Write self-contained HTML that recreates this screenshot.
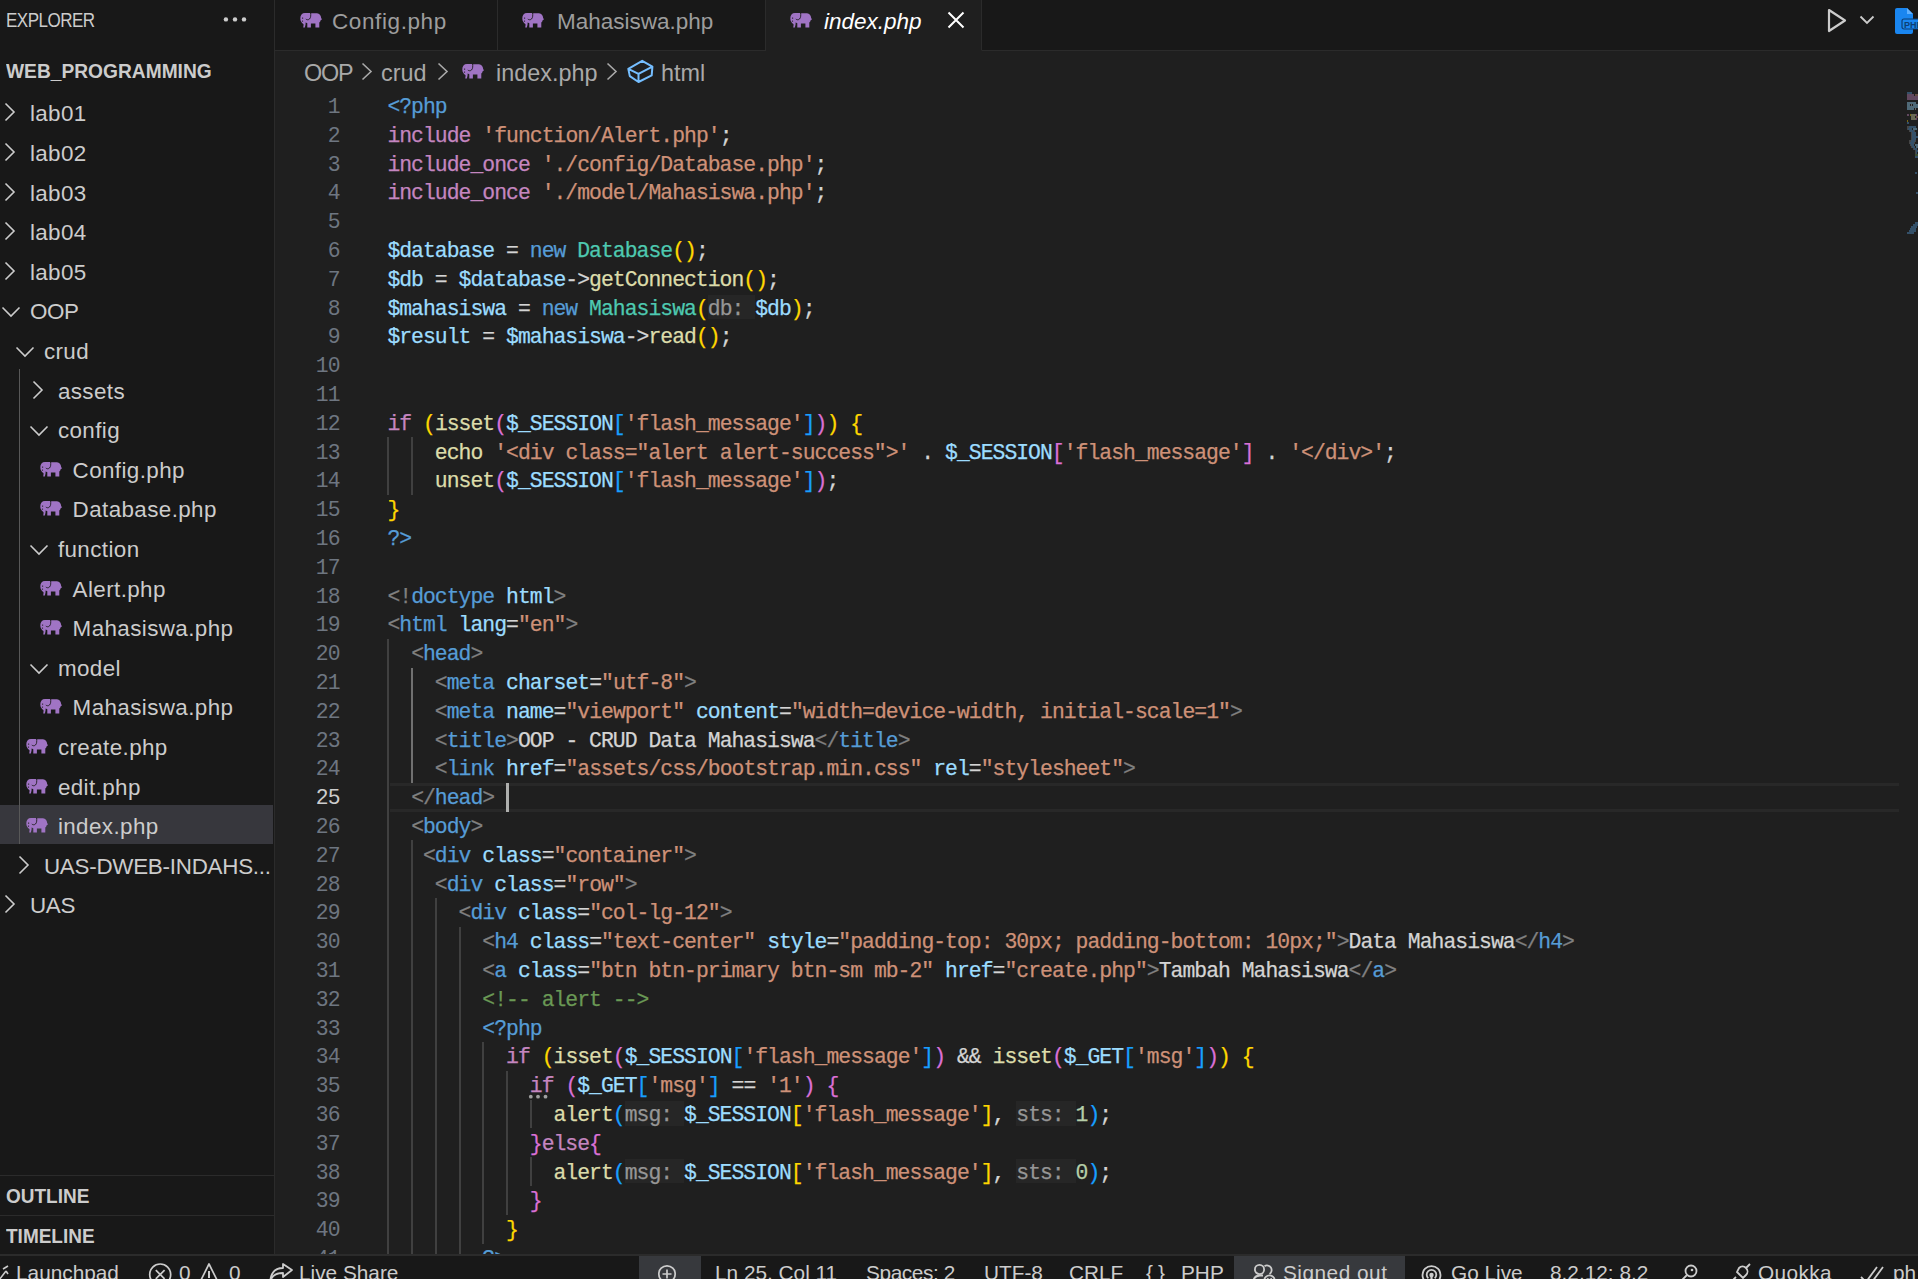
<!DOCTYPE html>
<html><head><meta charset="utf-8"><title>index.php - VS Code</title>
<style>
*{margin:0;padding:0;box-sizing:border-box}
html,body{width:1918px;height:1279px;overflow:hidden;background:#1f1f1f}
body{position:relative;font-family:"Liberation Sans",sans-serif;color:#cccccc}
.abs{position:absolute}
#side{position:absolute;left:0;top:0;width:275px;height:1254px;background:#181818;border-right:1px solid #2b2b2b}
#tabs{position:absolute;left:275px;top:0;width:1643px;height:51px;background:#181818;border-bottom:1px solid #2b2b2b}
.tab{position:absolute;top:0;height:51px;background:#181818;border-right:1px solid #2b2b2b;border-bottom:1px solid #2b2b2b}
.tab.act{background:#1f1f1f;border-bottom:1px solid #1f1f1f}
.tab .ic{position:absolute;top:12px}
.tab .tx{position:absolute;top:0;line-height:44px;font-size:22.5px;color:#9d9d9d;white-space:nowrap}
.tab.act .tx{color:#ffffff;font-style:italic}
#crumbs{position:absolute;left:275px;top:51px;height:40px;width:1643px;background:#1f1f1f}
#crumbs span{position:absolute;white-space:nowrap}
.ct{font-size:23.4px;color:#a9a9a9;top:2px;line-height:40px}
#nums{position:absolute;left:275px;top:93.1px;width:64.5px;text-align:right;font-family:"Liberation Mono",monospace;font-size:21.4px;letter-spacing:-0.972px;line-height:28.8px;color:#6e7681}
#nums .cur{color:#cccccc}
#code{position:absolute;left:387.4px;top:93.1px;font-family:"Liberation Mono",monospace;font-size:21.4px;letter-spacing:-0.972px;line-height:28.8px;white-space:pre;color:#d4d4d4;-webkit-text-stroke:0.25px currentColor}
.ln{height:28.8px}
.h{color:#969696;position:relative;z-index:0}.h::before{content:"";position:absolute;left:0;right:0;top:-1.8px;height:24.4px;background:#262626;z-index:-1}
.ig{position:absolute;width:2px;background:#404040}
.ig.act{background:#707070}
#curline{position:absolute;left:389.5px;top:782.8px;width:1509px;height:28.8px;border-top:3px solid #282828;border-bottom:3px solid #282828}
#cursor{position:absolute;left:506px;top:783px;width:3px;height:29px;background:#aeafad}
#status{position:absolute;left:0;top:1254px;width:1918px;height:25px;background:#181818;border-top:2px solid #2b2b2b;overflow:hidden}
#status span{position:absolute;white-space:nowrap;font-size:20.8px;line-height:36px;top:-1.2px;color:#cccccc}
.row{position:absolute;left:0;width:273px;height:39.6px;overflow:hidden}
.row.sel{background:linear-gradient(#37373d,#37373d) 0 0/273px 39px no-repeat}
.row span{position:absolute}
.tl{font-size:22.4px;line-height:39.6px;top:2px;white-space:nowrap;color:#cccccc}
.chr{top:10px}
.chd{top:14px}
.fic{top:12px}
.sh{position:absolute;left:0;width:274px;border-top:1px solid #2b2b2b;height:40px}
</style></head><body>
<div id="side">
  <span class="abs" style="left:6px;top:0;line-height:40px;font-size:19.8px;letter-spacing:-0.6px;transform:scaleX(0.86);transform-origin:left">EXPLORER</span>
  <svg class="abs" style="left:220px;top:14px" width="30" height="11" viewBox="0 0 30 11"><circle cx="5.9" cy="5.4" r="2.2" fill="#cccccc"/><circle cx="15" cy="5.4" r="2.2" fill="#cccccc"/><circle cx="24" cy="5.4" r="2.2" fill="#cccccc"/></svg>
  <span class="abs" style="left:6px;top:51.2px;line-height:40px;font-size:19.8px;font-weight:bold;transform:scaleX(0.97);transform-origin:left">WEB_PROGRAMMING</span>
  <div class="row" style="top:92.3px"><span class="chr" style="left:4px"><svg width="12" height="20" viewBox="0 0 12 20"><path d="M1.5,1.5 L10,10 L1.5,18.5" fill="none" stroke="#cccccc" stroke-width="1.6"/></svg></span><span class="tl" style="left:29.9px;letter-spacing:0.4px">lab01</span></div><div class="row" style="top:131.9px"><span class="chr" style="left:4px"><svg width="12" height="20" viewBox="0 0 12 20"><path d="M1.5,1.5 L10,10 L1.5,18.5" fill="none" stroke="#cccccc" stroke-width="1.6"/></svg></span><span class="tl" style="left:29.9px;letter-spacing:0.4px">lab02</span></div><div class="row" style="top:171.5px"><span class="chr" style="left:4px"><svg width="12" height="20" viewBox="0 0 12 20"><path d="M1.5,1.5 L10,10 L1.5,18.5" fill="none" stroke="#cccccc" stroke-width="1.6"/></svg></span><span class="tl" style="left:29.9px;letter-spacing:0.4px">lab03</span></div><div class="row" style="top:211.1px"><span class="chr" style="left:4px"><svg width="12" height="20" viewBox="0 0 12 20"><path d="M1.5,1.5 L10,10 L1.5,18.5" fill="none" stroke="#cccccc" stroke-width="1.6"/></svg></span><span class="tl" style="left:29.9px;letter-spacing:0.4px">lab04</span></div><div class="row" style="top:250.7px"><span class="chr" style="left:4px"><svg width="12" height="20" viewBox="0 0 12 20"><path d="M1.5,1.5 L10,10 L1.5,18.5" fill="none" stroke="#cccccc" stroke-width="1.6"/></svg></span><span class="tl" style="left:29.9px;letter-spacing:0.4px">lab05</span></div><div class="row" style="top:290.3px"><span class="chd" style="left:1px"><svg width="20" height="12" viewBox="0 0 20 12"><path d="M1.5,1.5 L10,10 L18.5,1.5" fill="none" stroke="#cccccc" stroke-width="1.6"/></svg></span><span class="tl" style="left:29.9px;letter-spacing:-0.3px">OOP</span></div><div class="row" style="top:329.9px"><span class="chd" style="left:15px"><svg width="20" height="12" viewBox="0 0 20 12"><path d="M1.5,1.5 L10,10 L18.5,1.5" fill="none" stroke="#cccccc" stroke-width="1.6"/></svg></span><span class="tl" style="left:43.9px;letter-spacing:0.4px">crud</span></div><div class="row" style="top:369.5px"><span class="chr" style="left:32px"><svg width="12" height="20" viewBox="0 0 12 20"><path d="M1.5,1.5 L10,10 L1.5,18.5" fill="none" stroke="#cccccc" stroke-width="1.6"/></svg></span><span class="tl" style="left:57.9px;letter-spacing:0.4px">assets</span></div><div class="row" style="top:409.1px"><span class="chd" style="left:29px"><svg width="20" height="12" viewBox="0 0 20 12"><path d="M1.5,1.5 L10,10 L18.5,1.5" fill="none" stroke="#cccccc" stroke-width="1.6"/></svg></span><span class="tl" style="left:57.9px;letter-spacing:0.4px">config</span></div><div class="row" style="top:448.7px"><span class="fic" style="left:40px"><svg width="22" height="16" viewBox="0 0 22 16"><path fill="#a074c4" d="M0.3,6.5C0.3,3 2,1 5,1L10.2,1 10.8,1.5 11.5,1.2 17,1.2C19.5,1.2 21,3.5 21.2,6L22,7.5 20.8,8C20.6,9 20,10 19.3,10.6L19.3,15.6 15.4,15.6 15.4,11.6 10.9,11.6 10.9,15.6 7.3,15.6 7.3,11.2C6.5,11 6,10.7 5.6,10.5L5.6,12C5.6,13 5,14.5 4.9,15.6L3.2,15.6C3.4,14 3.8,13 3.4,12C2,11 0.3,9.5 0.3,6.5Z"/><path fill="none" stroke="#1c1c1c" stroke-width="0.9" d="M10.6,0.8C10.8,3 11,5.5 9.5,7C8.5,8 6.8,8 5.8,7"/><circle cx="2.6" cy="6.1" r="0.7" fill="#1c1c1c"/><circle cx="2.5" cy="9.1" r="0.7" fill="#1c1c1c"/></svg></span><span class="tl" style="left:72.6px;letter-spacing:0.4px">Config.php</span></div><div class="row" style="top:488.3px"><span class="fic" style="left:40px"><svg width="22" height="16" viewBox="0 0 22 16"><path fill="#a074c4" d="M0.3,6.5C0.3,3 2,1 5,1L10.2,1 10.8,1.5 11.5,1.2 17,1.2C19.5,1.2 21,3.5 21.2,6L22,7.5 20.8,8C20.6,9 20,10 19.3,10.6L19.3,15.6 15.4,15.6 15.4,11.6 10.9,11.6 10.9,15.6 7.3,15.6 7.3,11.2C6.5,11 6,10.7 5.6,10.5L5.6,12C5.6,13 5,14.5 4.9,15.6L3.2,15.6C3.4,14 3.8,13 3.4,12C2,11 0.3,9.5 0.3,6.5Z"/><path fill="none" stroke="#1c1c1c" stroke-width="0.9" d="M10.6,0.8C10.8,3 11,5.5 9.5,7C8.5,8 6.8,8 5.8,7"/><circle cx="2.6" cy="6.1" r="0.7" fill="#1c1c1c"/><circle cx="2.5" cy="9.1" r="0.7" fill="#1c1c1c"/></svg></span><span class="tl" style="left:72.6px;letter-spacing:0.4px">Database.php</span></div><div class="row" style="top:527.9px"><span class="chd" style="left:29px"><svg width="20" height="12" viewBox="0 0 20 12"><path d="M1.5,1.5 L10,10 L18.5,1.5" fill="none" stroke="#cccccc" stroke-width="1.6"/></svg></span><span class="tl" style="left:57.9px;letter-spacing:0.4px">function</span></div><div class="row" style="top:567.5px"><span class="fic" style="left:40px"><svg width="22" height="16" viewBox="0 0 22 16"><path fill="#a074c4" d="M0.3,6.5C0.3,3 2,1 5,1L10.2,1 10.8,1.5 11.5,1.2 17,1.2C19.5,1.2 21,3.5 21.2,6L22,7.5 20.8,8C20.6,9 20,10 19.3,10.6L19.3,15.6 15.4,15.6 15.4,11.6 10.9,11.6 10.9,15.6 7.3,15.6 7.3,11.2C6.5,11 6,10.7 5.6,10.5L5.6,12C5.6,13 5,14.5 4.9,15.6L3.2,15.6C3.4,14 3.8,13 3.4,12C2,11 0.3,9.5 0.3,6.5Z"/><path fill="none" stroke="#1c1c1c" stroke-width="0.9" d="M10.6,0.8C10.8,3 11,5.5 9.5,7C8.5,8 6.8,8 5.8,7"/><circle cx="2.6" cy="6.1" r="0.7" fill="#1c1c1c"/><circle cx="2.5" cy="9.1" r="0.7" fill="#1c1c1c"/></svg></span><span class="tl" style="left:72.6px;letter-spacing:0.4px">Alert.php</span></div><div class="row" style="top:607.1px"><span class="fic" style="left:40px"><svg width="22" height="16" viewBox="0 0 22 16"><path fill="#a074c4" d="M0.3,6.5C0.3,3 2,1 5,1L10.2,1 10.8,1.5 11.5,1.2 17,1.2C19.5,1.2 21,3.5 21.2,6L22,7.5 20.8,8C20.6,9 20,10 19.3,10.6L19.3,15.6 15.4,15.6 15.4,11.6 10.9,11.6 10.9,15.6 7.3,15.6 7.3,11.2C6.5,11 6,10.7 5.6,10.5L5.6,12C5.6,13 5,14.5 4.9,15.6L3.2,15.6C3.4,14 3.8,13 3.4,12C2,11 0.3,9.5 0.3,6.5Z"/><path fill="none" stroke="#1c1c1c" stroke-width="0.9" d="M10.6,0.8C10.8,3 11,5.5 9.5,7C8.5,8 6.8,8 5.8,7"/><circle cx="2.6" cy="6.1" r="0.7" fill="#1c1c1c"/><circle cx="2.5" cy="9.1" r="0.7" fill="#1c1c1c"/></svg></span><span class="tl" style="left:72.6px;letter-spacing:0.4px">Mahasiswa.php</span></div><div class="row" style="top:646.7px"><span class="chd" style="left:29px"><svg width="20" height="12" viewBox="0 0 20 12"><path d="M1.5,1.5 L10,10 L18.5,1.5" fill="none" stroke="#cccccc" stroke-width="1.6"/></svg></span><span class="tl" style="left:57.9px;letter-spacing:0.4px">model</span></div><div class="row" style="top:686.3px"><span class="fic" style="left:40px"><svg width="22" height="16" viewBox="0 0 22 16"><path fill="#a074c4" d="M0.3,6.5C0.3,3 2,1 5,1L10.2,1 10.8,1.5 11.5,1.2 17,1.2C19.5,1.2 21,3.5 21.2,6L22,7.5 20.8,8C20.6,9 20,10 19.3,10.6L19.3,15.6 15.4,15.6 15.4,11.6 10.9,11.6 10.9,15.6 7.3,15.6 7.3,11.2C6.5,11 6,10.7 5.6,10.5L5.6,12C5.6,13 5,14.5 4.9,15.6L3.2,15.6C3.4,14 3.8,13 3.4,12C2,11 0.3,9.5 0.3,6.5Z"/><path fill="none" stroke="#1c1c1c" stroke-width="0.9" d="M10.6,0.8C10.8,3 11,5.5 9.5,7C8.5,8 6.8,8 5.8,7"/><circle cx="2.6" cy="6.1" r="0.7" fill="#1c1c1c"/><circle cx="2.5" cy="9.1" r="0.7" fill="#1c1c1c"/></svg></span><span class="tl" style="left:72.6px;letter-spacing:0.4px">Mahasiswa.php</span></div><div class="row" style="top:725.9px"><span class="fic" style="left:26px"><svg width="22" height="16" viewBox="0 0 22 16"><path fill="#a074c4" d="M0.3,6.5C0.3,3 2,1 5,1L10.2,1 10.8,1.5 11.5,1.2 17,1.2C19.5,1.2 21,3.5 21.2,6L22,7.5 20.8,8C20.6,9 20,10 19.3,10.6L19.3,15.6 15.4,15.6 15.4,11.6 10.9,11.6 10.9,15.6 7.3,15.6 7.3,11.2C6.5,11 6,10.7 5.6,10.5L5.6,12C5.6,13 5,14.5 4.9,15.6L3.2,15.6C3.4,14 3.8,13 3.4,12C2,11 0.3,9.5 0.3,6.5Z"/><path fill="none" stroke="#1c1c1c" stroke-width="0.9" d="M10.6,0.8C10.8,3 11,5.5 9.5,7C8.5,8 6.8,8 5.8,7"/><circle cx="2.6" cy="6.1" r="0.7" fill="#1c1c1c"/><circle cx="2.5" cy="9.1" r="0.7" fill="#1c1c1c"/></svg></span><span class="tl" style="left:57.9px;letter-spacing:0.4px">create.php</span></div><div class="row" style="top:765.5px"><span class="fic" style="left:26px"><svg width="22" height="16" viewBox="0 0 22 16"><path fill="#a074c4" d="M0.3,6.5C0.3,3 2,1 5,1L10.2,1 10.8,1.5 11.5,1.2 17,1.2C19.5,1.2 21,3.5 21.2,6L22,7.5 20.8,8C20.6,9 20,10 19.3,10.6L19.3,15.6 15.4,15.6 15.4,11.6 10.9,11.6 10.9,15.6 7.3,15.6 7.3,11.2C6.5,11 6,10.7 5.6,10.5L5.6,12C5.6,13 5,14.5 4.9,15.6L3.2,15.6C3.4,14 3.8,13 3.4,12C2,11 0.3,9.5 0.3,6.5Z"/><path fill="none" stroke="#1c1c1c" stroke-width="0.9" d="M10.6,0.8C10.8,3 11,5.5 9.5,7C8.5,8 6.8,8 5.8,7"/><circle cx="2.6" cy="6.1" r="0.7" fill="#1c1c1c"/><circle cx="2.5" cy="9.1" r="0.7" fill="#1c1c1c"/></svg></span><span class="tl" style="left:57.9px;letter-spacing:0.4px">edit.php</span></div><div class="row sel" style="top:805.1px"><span class="fic" style="left:26px"><svg width="22" height="16" viewBox="0 0 22 16"><path fill="#a074c4" d="M0.3,6.5C0.3,3 2,1 5,1L10.2,1 10.8,1.5 11.5,1.2 17,1.2C19.5,1.2 21,3.5 21.2,6L22,7.5 20.8,8C20.6,9 20,10 19.3,10.6L19.3,15.6 15.4,15.6 15.4,11.6 10.9,11.6 10.9,15.6 7.3,15.6 7.3,11.2C6.5,11 6,10.7 5.6,10.5L5.6,12C5.6,13 5,14.5 4.9,15.6L3.2,15.6C3.4,14 3.8,13 3.4,12C2,11 0.3,9.5 0.3,6.5Z"/><path fill="none" stroke="#1c1c1c" stroke-width="0.9" d="M10.6,0.8C10.8,3 11,5.5 9.5,7C8.5,8 6.8,8 5.8,7"/><circle cx="2.6" cy="6.1" r="0.7" fill="#1c1c1c"/><circle cx="2.5" cy="9.1" r="0.7" fill="#1c1c1c"/></svg></span><span class="tl" style="left:57.9px;letter-spacing:0.4px">index.php</span></div><div class="row" style="top:844.7px"><span class="chr" style="left:18px"><svg width="12" height="20" viewBox="0 0 12 20"><path d="M1.5,1.5 L10,10 L1.5,18.5" fill="none" stroke="#cccccc" stroke-width="1.6"/></svg></span><span class="tl" style="left:43.9px;letter-spacing:-0.25px">UAS-DWEB-INDAHS...</span></div><div class="row" style="top:884.3px"><span class="chr" style="left:4px"><svg width="12" height="20" viewBox="0 0 12 20"><path d="M1.5,1.5 L10,10 L1.5,18.5" fill="none" stroke="#cccccc" stroke-width="1.6"/></svg></span><span class="tl" style="left:29.9px;letter-spacing:-0.3px">UAS</span></div>
  <div class="abs" style="left:19px;top:369px;width:1px;height:475px;background:#585858"></div>
  <div class="sh" style="top:1175px"><span class="abs" style="left:6px;top:0;line-height:40px;font-size:19.8px;font-weight:bold;transform:scaleX(0.96);transform-origin:left">OUTLINE</span></div>
  <div class="sh" style="top:1215px"><span class="abs" style="left:6px;top:0;line-height:40px;font-size:19.8px;font-weight:bold;transform:scaleX(0.96);transform-origin:left">TIMELINE</span></div>
</div>
<div id="tabs">
  <div class="tab" style="left:0;width:223px"><span class="ic" style="left:24.6px"><svg width="22" height="16" viewBox="0 0 22 16"><path fill="#a074c4" d="M0.3,6.5C0.3,3 2,1 5,1L10.2,1 10.8,1.5 11.5,1.2 17,1.2C19.5,1.2 21,3.5 21.2,6L22,7.5 20.8,8C20.6,9 20,10 19.3,10.6L19.3,15.6 15.4,15.6 15.4,11.6 10.9,11.6 10.9,15.6 7.3,15.6 7.3,11.2C6.5,11 6,10.7 5.6,10.5L5.6,12C5.6,13 5,14.5 4.9,15.6L3.2,15.6C3.4,14 3.8,13 3.4,12C2,11 0.3,9.5 0.3,6.5Z"/><path fill="none" stroke="#1c1c1c" stroke-width="0.9" d="M10.6,0.8C10.8,3 11,5.5 9.5,7C8.5,8 6.8,8 5.8,7"/><circle cx="2.6" cy="6.1" r="0.7" fill="#1c1c1c"/><circle cx="2.5" cy="9.1" r="0.7" fill="#1c1c1c"/></svg></span><span class="tx" style="left:57px;letter-spacing:0.6px">Config.php</span></div>
  <div class="tab" style="left:223px;width:268px"><span class="ic" style="left:24.4px"><svg width="22" height="16" viewBox="0 0 22 16"><path fill="#a074c4" d="M0.3,6.5C0.3,3 2,1 5,1L10.2,1 10.8,1.5 11.5,1.2 17,1.2C19.5,1.2 21,3.5 21.2,6L22,7.5 20.8,8C20.6,9 20,10 19.3,10.6L19.3,15.6 15.4,15.6 15.4,11.6 10.9,11.6 10.9,15.6 7.3,15.6 7.3,11.2C6.5,11 6,10.7 5.6,10.5L5.6,12C5.6,13 5,14.5 4.9,15.6L3.2,15.6C3.4,14 3.8,13 3.4,12C2,11 0.3,9.5 0.3,6.5Z"/><path fill="none" stroke="#1c1c1c" stroke-width="0.9" d="M10.6,0.8C10.8,3 11,5.5 9.5,7C8.5,8 6.8,8 5.8,7"/><circle cx="2.6" cy="6.1" r="0.7" fill="#1c1c1c"/><circle cx="2.5" cy="9.1" r="0.7" fill="#1c1c1c"/></svg></span><span class="tx" style="left:59px">Mahasiswa.php</span></div>
  <div class="tab act" style="left:491px;width:216px"><span class="ic" style="left:24px"><svg width="22" height="16" viewBox="0 0 22 16"><path fill="#a074c4" d="M0.3,6.5C0.3,3 2,1 5,1L10.2,1 10.8,1.5 11.5,1.2 17,1.2C19.5,1.2 21,3.5 21.2,6L22,7.5 20.8,8C20.6,9 20,10 19.3,10.6L19.3,15.6 15.4,15.6 15.4,11.6 10.9,11.6 10.9,15.6 7.3,15.6 7.3,11.2C6.5,11 6,10.7 5.6,10.5L5.6,12C5.6,13 5,14.5 4.9,15.6L3.2,15.6C3.4,14 3.8,13 3.4,12C2,11 0.3,9.5 0.3,6.5Z"/><path fill="none" stroke="#1c1c1c" stroke-width="0.9" d="M10.6,0.8C10.8,3 11,5.5 9.5,7C8.5,8 6.8,8 5.8,7"/><circle cx="2.6" cy="6.1" r="0.7" fill="#1c1c1c"/><circle cx="2.5" cy="9.1" r="0.7" fill="#1c1c1c"/></svg></span><span class="tx" style="left:58px">index.php</span>
    <svg class="abs" style="left:181px;top:11px" width="18" height="18" viewBox="0 0 18 18"><path d="M1.5,1.5L16.5,16.5M16.5,1.5L1.5,16.5" stroke="#ffffff" stroke-width="2"/></svg></div>
  <svg class="abs" style="left:1552px;top:8px" width="20" height="25" viewBox="0 0 20 25"><path d="M2,2 L18,12.5 L2,23Z" fill="none" stroke="#cccccc" stroke-width="2.2" stroke-linejoin="round"/></svg>
  <svg class="abs" style="left:1584px;top:15px" width="16" height="10" viewBox="0 0 16 10"><path d="M1.5,1.5L8,8L14.5,1.5" fill="none" stroke="#cccccc" stroke-width="1.8"/></svg>
  <svg class="abs" style="left:1620px;top:8px" width="23" height="26" viewBox="0 0 23 26"><path d="M2,0 L12,0 L18,6 L18,24 Q18,26 16,26 L2,26 Q0,26 0,24 L0,2 Q0,0 2,0Z" fill="#1a86f0"/><path d="M12,0 L12,6 L18,6" fill="#5fb0ff"/><rect x="7" y="11" width="20" height="10" rx="2" fill="#1a86f0" stroke="#0d3f73" stroke-width="1.2"/><text x="9" y="19.5" font-family="Liberation Sans" font-size="9" font-weight="bold" fill="#0d3f73">PHP</text></svg>
</div>
<div id="crumbs">
  <span class="ct" style="left:29px;letter-spacing:-1.2px">OOP</span>
  <svg class="abs" style="left:86px;top:11px" width="12" height="19" viewBox="0 0 12 19"><path d="M1.5,1.5L10,9.5L1.5,17.5" fill="none" stroke="#a9a9a9" stroke-width="1.6"/></svg>
  <span class="ct" style="left:106px">crud</span>
  <svg class="abs" style="left:162px;top:11px" width="12" height="19" viewBox="0 0 12 19"><path d="M1.5,1.5L10,9.5L1.5,17.5" fill="none" stroke="#a9a9a9" stroke-width="1.6"/></svg>
  <span class="abs" style="left:187px;top:11.5px"><svg width="22" height="16" viewBox="0 0 22 16"><path fill="#a074c4" d="M0.3,6.5C0.3,3 2,1 5,1L10.2,1 10.8,1.5 11.5,1.2 17,1.2C19.5,1.2 21,3.5 21.2,6L22,7.5 20.8,8C20.6,9 20,10 19.3,10.6L19.3,15.6 15.4,15.6 15.4,11.6 10.9,11.6 10.9,15.6 7.3,15.6 7.3,11.2C6.5,11 6,10.7 5.6,10.5L5.6,12C5.6,13 5,14.5 4.9,15.6L3.2,15.6C3.4,14 3.8,13 3.4,12C2,11 0.3,9.5 0.3,6.5Z"/><path fill="none" stroke="#1c1c1c" stroke-width="0.9" d="M10.6,0.8C10.8,3 11,5.5 9.5,7C8.5,8 6.8,8 5.8,7"/><circle cx="2.6" cy="6.1" r="0.7" fill="#1c1c1c"/><circle cx="2.5" cy="9.1" r="0.7" fill="#1c1c1c"/></svg></span>
  <span class="ct" style="left:221px">index.php</span>
  <svg class="abs" style="left:331px;top:11px" width="12" height="19" viewBox="0 0 12 19"><path d="M1.5,1.5L10,9.5L1.5,17.5" fill="none" stroke="#a9a9a9" stroke-width="1.6"/></svg>
  <svg class="abs" style="left:351px;top:7px" width="30" height="27" viewBox="0 0 30 27"><path d="M2.3,10.8 L16.2,2.8 L26.4,8.6 L12.5,15.9Z M2.3,10.8 L3.8,18.1 L12.5,24 L12.5,15.9 M26.4,8.6 L25.7,17.3 L12.5,24" fill="none" stroke="#75beff" stroke-width="2" stroke-linejoin="round"/></svg>
  <span class="ct" style="left:386px">html</span>
</div>
<div id="nums"><div class="nm">1</div><div class="nm">2</div><div class="nm">3</div><div class="nm">4</div><div class="nm">5</div><div class="nm">6</div><div class="nm">7</div><div class="nm">8</div><div class="nm">9</div><div class="nm">10</div><div class="nm">11</div><div class="nm">12</div><div class="nm">13</div><div class="nm">14</div><div class="nm">15</div><div class="nm">16</div><div class="nm">17</div><div class="nm">18</div><div class="nm">19</div><div class="nm">20</div><div class="nm">21</div><div class="nm">22</div><div class="nm">23</div><div class="nm">24</div><div class="nm cur">25</div><div class="nm">26</div><div class="nm">27</div><div class="nm">28</div><div class="nm">29</div><div class="nm">30</div><div class="nm">31</div><div class="nm">32</div><div class="nm">33</div><div class="nm">34</div><div class="nm">35</div><div class="nm">36</div><div class="nm">37</div><div class="nm">38</div><div class="nm">39</div><div class="nm">40</div><div class="nm">41</div></div>
<div id="curline"></div>
<div class="ig" style="left:387.4px;top:437.2px;height:57.6px"></div><div class="ig" style="left:411.1px;top:437.2px;height:57.6px"></div><div class="ig" style="left:387.4px;top:638.8px;height:633.6px"></div><div class="ig act" style="left:411.1px;top:667.6px;height:115.2px"></div><div class="ig" style="left:411.1px;top:840.4px;height:432.0px"></div><div class="ig" style="left:434.9px;top:898.0px;height:374.4px"></div><div class="ig" style="left:458.6px;top:926.8px;height:345.6px"></div><div class="ig" style="left:482.4px;top:1042.0px;height:201.6px"></div><div class="ig" style="left:506.1px;top:1070.8px;height:144.0px"></div><div class="ig" style="left:529.8px;top:1099.6px;height:28.8px"></div><div class="ig" style="left:529.8px;top:1157.2px;height:28.8px"></div>
<div id="code"><div class="ln"><span style="color:#569cd6">&lt;?php</span></div><div class="ln"><span style="color:#c586c0">include</span><span style="color:#d4d4d4"> </span><span style="color:#ce9178">'function/Alert.php'</span><span style="color:#d4d4d4">;</span></div><div class="ln"><span style="color:#c586c0">include_once</span><span style="color:#d4d4d4"> </span><span style="color:#ce9178">'./config/Database.php'</span><span style="color:#d4d4d4">;</span></div><div class="ln"><span style="color:#c586c0">include_once</span><span style="color:#d4d4d4"> </span><span style="color:#ce9178">'./model/Mahasiswa.php'</span><span style="color:#d4d4d4">;</span></div><div class="ln"></div><div class="ln"><span style="color:#9cdcfe">$database</span><span style="color:#d4d4d4"> = </span><span style="color:#569cd6">new</span><span style="color:#d4d4d4"> </span><span style="color:#4ec9b0">Database</span><span style="color:#ffd700">(</span><span style="color:#ffd700">)</span><span style="color:#d4d4d4">;</span></div><div class="ln"><span style="color:#9cdcfe">$db</span><span style="color:#d4d4d4"> = </span><span style="color:#9cdcfe">$database</span><span style="color:#d4d4d4">-&gt;</span><span style="color:#dcdcaa">getConnection</span><span style="color:#ffd700">(</span><span style="color:#ffd700">)</span><span style="color:#d4d4d4">;</span></div><div class="ln"><span style="color:#9cdcfe">$mahasiswa</span><span style="color:#d4d4d4"> = </span><span style="color:#569cd6">new</span><span style="color:#d4d4d4"> </span><span style="color:#4ec9b0">Mahasiswa</span><span style="color:#ffd700">(</span><span class="h">db: </span><span style="color:#9cdcfe">$db</span><span style="color:#ffd700">)</span><span style="color:#d4d4d4">;</span></div><div class="ln"><span style="color:#9cdcfe">$result</span><span style="color:#d4d4d4"> = </span><span style="color:#9cdcfe">$mahasiswa</span><span style="color:#d4d4d4">-&gt;</span><span style="color:#dcdcaa">read</span><span style="color:#ffd700">(</span><span style="color:#ffd700">)</span><span style="color:#d4d4d4">;</span></div><div class="ln"></div><div class="ln"></div><div class="ln"><span style="color:#c586c0">if</span><span style="color:#d4d4d4"> </span><span style="color:#ffd700">(</span><span style="color:#dcdcaa">isset</span><span style="color:#da70d6">(</span><span style="color:#9cdcfe">$_SESSION</span><span style="color:#179fff">[</span><span style="color:#ce9178">'flash_message'</span><span style="color:#179fff">]</span><span style="color:#da70d6">)</span><span style="color:#ffd700">)</span><span style="color:#d4d4d4"> </span><span style="color:#ffd700">{</span></div><div class="ln"><span style="color:#d4d4d4">    </span><span style="color:#dcdcaa">echo</span><span style="color:#d4d4d4"> </span><span style="color:#ce9178">'&lt;div class="alert alert-success"&gt;'</span><span style="color:#d4d4d4"> . </span><span style="color:#9cdcfe">$_SESSION</span><span style="color:#da70d6">[</span><span style="color:#ce9178">'flash_message'</span><span style="color:#da70d6">]</span><span style="color:#d4d4d4"> . </span><span style="color:#ce9178">'&lt;/div&gt;'</span><span style="color:#d4d4d4">;</span></div><div class="ln"><span style="color:#d4d4d4">    </span><span style="color:#dcdcaa">unset</span><span style="color:#da70d6">(</span><span style="color:#9cdcfe">$_SESSION</span><span style="color:#179fff">[</span><span style="color:#ce9178">'flash_message'</span><span style="color:#179fff">]</span><span style="color:#da70d6">)</span><span style="color:#d4d4d4">;</span></div><div class="ln"><span style="color:#ffd700">}</span></div><div class="ln"><span style="color:#569cd6">?&gt;</span></div><div class="ln"></div><div class="ln"><span style="color:#808080">&lt;!</span><span style="color:#569cd6">doctype</span><span style="color:#d4d4d4"> </span><span style="color:#9cdcfe">html</span><span style="color:#808080">&gt;</span></div><div class="ln"><span style="color:#808080">&lt;</span><span style="color:#569cd6">html</span><span style="color:#d4d4d4"> </span><span style="color:#9cdcfe">lang</span><span style="color:#d4d4d4">=</span><span style="color:#ce9178">"en"</span><span style="color:#808080">&gt;</span></div><div class="ln"><span style="color:#d4d4d4">  </span><span style="color:#808080">&lt;</span><span style="color:#569cd6">head</span><span style="color:#808080">&gt;</span></div><div class="ln"><span style="color:#d4d4d4">    </span><span style="color:#808080">&lt;</span><span style="color:#569cd6">meta</span><span style="color:#d4d4d4"> </span><span style="color:#9cdcfe">charset</span><span style="color:#d4d4d4">=</span><span style="color:#ce9178">"utf-8"</span><span style="color:#808080">&gt;</span></div><div class="ln"><span style="color:#d4d4d4">    </span><span style="color:#808080">&lt;</span><span style="color:#569cd6">meta</span><span style="color:#d4d4d4"> </span><span style="color:#9cdcfe">name</span><span style="color:#d4d4d4">=</span><span style="color:#ce9178">"viewport"</span><span style="color:#d4d4d4"> </span><span style="color:#9cdcfe">content</span><span style="color:#d4d4d4">=</span><span style="color:#ce9178">"width=device-width, initial-scale=1"</span><span style="color:#808080">&gt;</span></div><div class="ln"><span style="color:#d4d4d4">    </span><span style="color:#808080">&lt;</span><span style="color:#569cd6">title</span><span style="color:#808080">&gt;</span><span style="color:#d4d4d4">OOP - CRUD Data Mahasiswa</span><span style="color:#808080">&lt;/</span><span style="color:#569cd6">title</span><span style="color:#808080">&gt;</span></div><div class="ln"><span style="color:#d4d4d4">    </span><span style="color:#808080">&lt;</span><span style="color:#569cd6">link</span><span style="color:#d4d4d4"> </span><span style="color:#9cdcfe">href</span><span style="color:#d4d4d4">=</span><span style="color:#ce9178">"assets/css/bootstrap.min.css"</span><span style="color:#d4d4d4"> </span><span style="color:#9cdcfe">rel</span><span style="color:#d4d4d4">=</span><span style="color:#ce9178">"stylesheet"</span><span style="color:#808080">&gt;</span></div><div class="ln"><span style="color:#d4d4d4">  </span><span style="color:#808080">&lt;/</span><span style="color:#569cd6">head</span><span style="color:#808080">&gt;</span></div><div class="ln"><span style="color:#d4d4d4">  </span><span style="color:#808080">&lt;</span><span style="color:#569cd6">body</span><span style="color:#808080">&gt;</span></div><div class="ln"><span style="color:#d4d4d4">   </span><span style="color:#808080">&lt;</span><span style="color:#569cd6">div</span><span style="color:#d4d4d4"> </span><span style="color:#9cdcfe">class</span><span style="color:#d4d4d4">=</span><span style="color:#ce9178">"container"</span><span style="color:#808080">&gt;</span></div><div class="ln"><span style="color:#d4d4d4">    </span><span style="color:#808080">&lt;</span><span style="color:#569cd6">div</span><span style="color:#d4d4d4"> </span><span style="color:#9cdcfe">class</span><span style="color:#d4d4d4">=</span><span style="color:#ce9178">"row"</span><span style="color:#808080">&gt;</span></div><div class="ln"><span style="color:#d4d4d4">      </span><span style="color:#808080">&lt;</span><span style="color:#569cd6">div</span><span style="color:#d4d4d4"> </span><span style="color:#9cdcfe">class</span><span style="color:#d4d4d4">=</span><span style="color:#ce9178">"col-lg-12"</span><span style="color:#808080">&gt;</span></div><div class="ln"><span style="color:#d4d4d4">        </span><span style="color:#808080">&lt;</span><span style="color:#569cd6">h4</span><span style="color:#d4d4d4"> </span><span style="color:#9cdcfe">class</span><span style="color:#d4d4d4">=</span><span style="color:#ce9178">"text-center"</span><span style="color:#d4d4d4"> </span><span style="color:#9cdcfe">style</span><span style="color:#d4d4d4">=</span><span style="color:#ce9178">"padding-top: 30px; padding-bottom: 10px;"</span><span style="color:#808080">&gt;</span><span style="color:#d4d4d4">Data Mahasiswa</span><span style="color:#808080">&lt;/</span><span style="color:#569cd6">h4</span><span style="color:#808080">&gt;</span></div><div class="ln"><span style="color:#d4d4d4">        </span><span style="color:#808080">&lt;</span><span style="color:#569cd6">a</span><span style="color:#d4d4d4"> </span><span style="color:#9cdcfe">class</span><span style="color:#d4d4d4">=</span><span style="color:#ce9178">"btn btn-primary btn-sm mb-2"</span><span style="color:#d4d4d4"> </span><span style="color:#9cdcfe">href</span><span style="color:#d4d4d4">=</span><span style="color:#ce9178">"create.php"</span><span style="color:#808080">&gt;</span><span style="color:#d4d4d4">Tambah Mahasiswa</span><span style="color:#808080">&lt;/</span><span style="color:#569cd6">a</span><span style="color:#808080">&gt;</span></div><div class="ln"><span style="color:#d4d4d4">        </span><span style="color:#6a9955">&lt;!-- alert --&gt;</span></div><div class="ln"><span style="color:#d4d4d4">        </span><span style="color:#569cd6">&lt;?php</span></div><div class="ln"><span style="color:#d4d4d4">          </span><span style="color:#c586c0">if</span><span style="color:#d4d4d4"> </span><span style="color:#ffd700">(</span><span style="color:#dcdcaa">isset</span><span style="color:#da70d6">(</span><span style="color:#9cdcfe">$_SESSION</span><span style="color:#179fff">[</span><span style="color:#ce9178">'flash_message'</span><span style="color:#179fff">]</span><span style="color:#da70d6">)</span><span style="color:#d4d4d4"> &amp;&amp; </span><span style="color:#dcdcaa">isset</span><span style="color:#da70d6">(</span><span style="color:#9cdcfe">$_GET</span><span style="color:#179fff">[</span><span style="color:#ce9178">'msg'</span><span style="color:#179fff">]</span><span style="color:#da70d6">)</span><span style="color:#ffd700">)</span><span style="color:#d4d4d4"> </span><span style="color:#ffd700">{</span></div><div class="ln"><span style="color:#d4d4d4">            </span><span style="color:#c586c0">if</span><span style="color:#d4d4d4"> </span><span style="color:#da70d6">(</span><span style="color:#9cdcfe">$_GET</span><span style="color:#179fff">[</span><span style="color:#ce9178">'msg'</span><span style="color:#179fff">]</span><span style="color:#d4d4d4"> == </span><span style="color:#ce9178">'1'</span><span style="color:#da70d6">)</span><span style="color:#d4d4d4"> </span><span style="color:#da70d6">{</span></div><div class="ln"><span style="color:#d4d4d4">              </span><span style="color:#dcdcaa">alert</span><span style="color:#179fff">(</span><span class="h">msg: </span><span style="color:#9cdcfe">$_SESSION</span><span style="color:#ffd700">[</span><span style="color:#ce9178">'flash_message'</span><span style="color:#ffd700">]</span><span style="color:#d4d4d4">, </span><span class="h">sts: </span><span style="color:#b5cea8">1</span><span style="color:#179fff">)</span><span style="color:#d4d4d4">;</span></div><div class="ln"><span style="color:#d4d4d4">            </span><span style="color:#da70d6">}</span><span style="color:#c586c0">else</span><span style="color:#da70d6">{</span></div><div class="ln"><span style="color:#d4d4d4">              </span><span style="color:#dcdcaa">alert</span><span style="color:#179fff">(</span><span class="h">msg: </span><span style="color:#9cdcfe">$_SESSION</span><span style="color:#ffd700">[</span><span style="color:#ce9178">'flash_message'</span><span style="color:#ffd700">]</span><span style="color:#d4d4d4">, </span><span class="h">sts: </span><span style="color:#b5cea8">0</span><span style="color:#179fff">)</span><span style="color:#d4d4d4">;</span></div><div class="ln"><span style="color:#d4d4d4">            </span><span style="color:#da70d6">}</span></div><div class="ln"><span style="color:#d4d4d4">          </span><span style="color:#ffd700">}</span></div><div class="ln"><span style="color:#d4d4d4">        </span><span style="color:#569cd6">?&gt;</span></div></div>
<div id="cursor"></div>
<svg class="abs" style="left:527px;top:1093px" width="22" height="8" viewBox="0 0 22 8"><circle cx="3.8" cy="3.7" r="1.9" fill="#a0a0a0"/><circle cx="11" cy="3.7" r="1.9" fill="#a0a0a0"/><circle cx="18.5" cy="3.7" r="1.9" fill="#a0a0a0"/></svg>
<div id="minimap"><div style="position:absolute;left:1907.00px;top:92px;width:5.25px;height:2px;background:#569cd6;opacity:.4"></div><div style="position:absolute;left:1907.00px;top:94px;width:7.35px;height:2px;background:#c586c0;opacity:.4"></div><div style="position:absolute;left:1915.40px;top:94px;width:21.00px;height:2px;background:#ce9178;opacity:.4"></div><div style="position:absolute;left:1907.00px;top:96px;width:12.60px;height:2px;background:#c586c0;opacity:.4"></div><div style="position:absolute;left:1907.00px;top:98px;width:12.60px;height:2px;background:#c586c0;opacity:.4"></div><div style="position:absolute;left:1907.00px;top:102px;width:9.45px;height:2px;background:#9cdcfe;opacity:.4"></div><div style="position:absolute;left:1917.50px;top:102px;width:1.05px;height:2px;background:#d4d4d4;opacity:.4"></div><div style="position:absolute;left:1907.00px;top:104px;width:3.15px;height:2px;background:#9cdcfe;opacity:.4"></div><div style="position:absolute;left:1911.20px;top:104px;width:1.05px;height:2px;background:#d4d4d4;opacity:.4"></div><div style="position:absolute;left:1913.30px;top:104px;width:9.45px;height:2px;background:#9cdcfe;opacity:.4"></div><div style="position:absolute;left:1907.00px;top:106px;width:10.50px;height:2px;background:#9cdcfe;opacity:.4"></div><div style="position:absolute;left:1907.00px;top:108px;width:7.35px;height:2px;background:#9cdcfe;opacity:.4"></div><div style="position:absolute;left:1915.40px;top:108px;width:1.05px;height:2px;background:#d4d4d4;opacity:.4"></div><div style="position:absolute;left:1917.50px;top:108px;width:10.50px;height:2px;background:#9cdcfe;opacity:.4"></div><div style="position:absolute;left:1907.00px;top:114px;width:2.10px;height:2px;background:#c586c0;opacity:.4"></div><div style="position:absolute;left:1910.15px;top:114px;width:1.05px;height:2px;background:#ffd700;opacity:.4"></div><div style="position:absolute;left:1911.20px;top:114px;width:5.25px;height:2px;background:#dcdcaa;opacity:.4"></div><div style="position:absolute;left:1916.45px;top:114px;width:1.05px;height:2px;background:#da70d6;opacity:.4"></div><div style="position:absolute;left:1917.50px;top:114px;width:9.45px;height:2px;background:#9cdcfe;opacity:.4"></div><div style="position:absolute;left:1911.20px;top:116px;width:4.20px;height:2px;background:#dcdcaa;opacity:.4"></div><div style="position:absolute;left:1916.45px;top:116px;width:5.25px;height:2px;background:#ce9178;opacity:.4"></div><div style="position:absolute;left:1911.20px;top:118px;width:5.25px;height:2px;background:#dcdcaa;opacity:.4"></div><div style="position:absolute;left:1916.45px;top:118px;width:1.05px;height:2px;background:#da70d6;opacity:.4"></div><div style="position:absolute;left:1917.50px;top:118px;width:9.45px;height:2px;background:#9cdcfe;opacity:.4"></div><div style="position:absolute;left:1907.00px;top:120px;width:1.05px;height:2px;background:#ffd700;opacity:.4"></div><div style="position:absolute;left:1907.00px;top:122px;width:2.10px;height:2px;background:#569cd6;opacity:.4"></div><div style="position:absolute;left:1907.00px;top:126px;width:2.10px;height:2px;background:#808080;opacity:.4"></div><div style="position:absolute;left:1909.10px;top:126px;width:7.35px;height:2px;background:#569cd6;opacity:.4"></div><div style="position:absolute;left:1917.50px;top:126px;width:4.20px;height:2px;background:#9cdcfe;opacity:.4"></div><div style="position:absolute;left:1907.00px;top:128px;width:1.05px;height:2px;background:#808080;opacity:.4"></div><div style="position:absolute;left:1908.05px;top:128px;width:4.20px;height:2px;background:#569cd6;opacity:.4"></div><div style="position:absolute;left:1913.30px;top:128px;width:4.20px;height:2px;background:#9cdcfe;opacity:.4"></div><div style="position:absolute;left:1917.50px;top:128px;width:1.05px;height:2px;background:#d4d4d4;opacity:.4"></div><div style="position:absolute;left:1909.10px;top:130px;width:1.05px;height:2px;background:#808080;opacity:.4"></div><div style="position:absolute;left:1910.15px;top:130px;width:4.20px;height:2px;background:#569cd6;opacity:.4"></div><div style="position:absolute;left:1914.35px;top:130px;width:1.05px;height:2px;background:#808080;opacity:.4"></div><div style="position:absolute;left:1911.20px;top:132px;width:1.05px;height:2px;background:#808080;opacity:.4"></div><div style="position:absolute;left:1912.25px;top:132px;width:4.20px;height:2px;background:#569cd6;opacity:.4"></div><div style="position:absolute;left:1917.50px;top:132px;width:7.35px;height:2px;background:#9cdcfe;opacity:.4"></div><div style="position:absolute;left:1911.20px;top:134px;width:1.05px;height:2px;background:#808080;opacity:.4"></div><div style="position:absolute;left:1912.25px;top:134px;width:4.20px;height:2px;background:#569cd6;opacity:.4"></div><div style="position:absolute;left:1917.50px;top:134px;width:4.20px;height:2px;background:#9cdcfe;opacity:.4"></div><div style="position:absolute;left:1911.20px;top:136px;width:1.05px;height:2px;background:#808080;opacity:.4"></div><div style="position:absolute;left:1912.25px;top:136px;width:5.25px;height:2px;background:#569cd6;opacity:.4"></div><div style="position:absolute;left:1917.50px;top:136px;width:1.05px;height:2px;background:#808080;opacity:.4"></div><div style="position:absolute;left:1911.20px;top:138px;width:1.05px;height:2px;background:#808080;opacity:.4"></div><div style="position:absolute;left:1912.25px;top:138px;width:4.20px;height:2px;background:#569cd6;opacity:.4"></div><div style="position:absolute;left:1917.50px;top:138px;width:4.20px;height:2px;background:#9cdcfe;opacity:.4"></div><div style="position:absolute;left:1909.10px;top:140px;width:2.10px;height:2px;background:#808080;opacity:.4"></div><div style="position:absolute;left:1911.20px;top:140px;width:4.20px;height:2px;background:#569cd6;opacity:.4"></div><div style="position:absolute;left:1915.40px;top:140px;width:1.05px;height:2px;background:#808080;opacity:.4"></div><div style="position:absolute;left:1909.10px;top:142px;width:1.05px;height:2px;background:#808080;opacity:.4"></div><div style="position:absolute;left:1910.15px;top:142px;width:4.20px;height:2px;background:#569cd6;opacity:.4"></div><div style="position:absolute;left:1914.35px;top:142px;width:1.05px;height:2px;background:#808080;opacity:.4"></div><div style="position:absolute;left:1910.15px;top:144px;width:1.05px;height:2px;background:#808080;opacity:.4"></div><div style="position:absolute;left:1911.20px;top:144px;width:3.15px;height:2px;background:#569cd6;opacity:.4"></div><div style="position:absolute;left:1915.40px;top:144px;width:5.25px;height:2px;background:#9cdcfe;opacity:.4"></div><div style="position:absolute;left:1911.20px;top:146px;width:1.05px;height:2px;background:#808080;opacity:.4"></div><div style="position:absolute;left:1912.25px;top:146px;width:3.15px;height:2px;background:#569cd6;opacity:.4"></div><div style="position:absolute;left:1916.45px;top:146px;width:5.25px;height:2px;background:#9cdcfe;opacity:.4"></div><div style="position:absolute;left:1913.30px;top:148px;width:1.05px;height:2px;background:#808080;opacity:.4"></div><div style="position:absolute;left:1914.35px;top:148px;width:3.15px;height:2px;background:#569cd6;opacity:.4"></div><div style="position:absolute;left:1915.40px;top:150px;width:1.05px;height:2px;background:#808080;opacity:.4"></div><div style="position:absolute;left:1916.45px;top:150px;width:2.10px;height:2px;background:#569cd6;opacity:.4"></div><div style="position:absolute;left:1915.40px;top:152px;width:1.05px;height:2px;background:#808080;opacity:.4"></div><div style="position:absolute;left:1916.45px;top:152px;width:1.05px;height:2px;background:#569cd6;opacity:.4"></div><div style="position:absolute;left:1915.40px;top:154px;width:4.20px;height:2px;background:#6a9955;opacity:.4"></div><div style="position:absolute;left:1915.40px;top:156px;width:5.25px;height:2px;background:#569cd6;opacity:.4"></div><div style="position:absolute;left:1917.50px;top:158px;width:2.10px;height:2px;background:#c586c0;opacity:.4"></div><div style="position:absolute;left:1917.50px;top:170px;width:1.05px;height:2px;background:#ffd700;opacity:.4"></div><div style="position:absolute;left:1915.40px;top:172px;width:2.10px;height:2px;background:#569cd6;opacity:.4"></div><div style="position:absolute;left:1917.50px;top:188px;width:4.20px;height:2px;background:#808080;opacity:.4"></div><div style="position:absolute;left:1917.50px;top:190px;width:5.25px;height:2px;background:#569cd6;opacity:.4"></div><div style="position:absolute;left:1916.45px;top:192px;width:4.20px;height:2px;background:#569cd6;opacity:.4"></div><div style="position:absolute;left:1917.50px;top:220px;width:5.25px;height:2px;background:#569cd6;opacity:.4"></div><div style="position:absolute;left:1915.40px;top:222px;width:8.40px;height:2px;background:#569cd6;opacity:.4"></div><div style="position:absolute;left:1913.30px;top:224px;width:6.30px;height:2px;background:#569cd6;opacity:.4"></div><div style="position:absolute;left:1911.20px;top:226px;width:6.30px;height:2px;background:#569cd6;opacity:.4"></div><div style="position:absolute;left:1910.15px;top:228px;width:6.30px;height:2px;background:#569cd6;opacity:.4"></div><div style="position:absolute;left:1909.10px;top:230px;width:7.35px;height:2px;background:#569cd6;opacity:.4"></div><div style="position:absolute;left:1907.00px;top:232px;width:7.35px;height:2px;background:#569cd6;opacity:.4"></div></div>
<div id="status">
  <svg class="abs" style="left:-2px;top:9px" width="12" height="16" viewBox="0 0 12 16"><path d="M1,15 L8,6 M5,4 L10,1 M8,6 L10,9" fill="none" stroke="#cccccc" stroke-width="1.6"/></svg>
  <span style="left:16px">Launchpad</span>
  <svg class="abs" style="left:148px;top:6px" width="25" height="25" viewBox="0 0 25 25"><circle cx="12.2" cy="12.5" r="10.5" fill="none" stroke="#cccccc" stroke-width="1.7"/><path d="M7.8,8.1 L16.6,16.9 M16.6,8.1 L7.8,16.9" stroke="#cccccc" stroke-width="1.7"/></svg>
  <span style="left:179px">0</span>
  <svg class="abs" style="left:198px;top:6px" width="23" height="24" viewBox="0 0 23 24"><path d="M11,2 L21,22 L1,22Z" fill="none" stroke="#cccccc" stroke-width="1.7" stroke-linejoin="round"/><path d="M11,9 L11,16" stroke="#cccccc" stroke-width="2"/></svg>
  <span style="left:229px">0</span>
  <svg class="abs" style="left:268px;top:7px" width="26" height="24" viewBox="0 0 26 24"><path d="M2,22 C2,14 7,10 15,10 L15,14 L24,7 L15,1 L15,5 C6,5 2,11 2,22Z" fill="none" stroke="#cccccc" stroke-width="1.8" stroke-linejoin="round"/></svg>
  <span style="left:299px">Live Share</span>
  <div class="abs" style="left:638.7px;top:0;width:62.3px;height:25px;background:#37393d"></div>
  <svg class="abs" style="left:657px;top:7.5px" width="21" height="21" viewBox="0 0 21 21"><circle cx="10" cy="10" r="8.2" fill="none" stroke="#cccccc" stroke-width="1.7"/><path d="M10,5.5 L10,14.5 M5.5,10 L14.5,10" stroke="#cccccc" stroke-width="1.7"/></svg>
  <span style="left:715px">Ln 25, Col 11</span>
  <span style="left:866px;letter-spacing:-0.4px">Spaces: 2</span>
  <span style="left:984px">UTF-8</span>
  <span style="left:1069px">CRLF</span>
  <span style="left:1146px">{</span><span style="left:1158px">}</span>
  <span style="left:1181px">PHP</span>
  <div class="abs" style="left:1234px;top:0;width:171px;height:25px;background:#37393d"></div>
  <svg class="abs" style="left:1252px;top:7px" width="26" height="22" viewBox="0 0 26 22"><circle cx="7.5" cy="6.5" r="4.6" fill="none" stroke="#cccccc" stroke-width="1.8"/><path d="M12.5,3.2 A4.6,4.6 0 1 1 17.5,11" fill="none" stroke="#cccccc" stroke-width="1.8"/><path d="M1,21 C1,15 4,12.5 8,12.5 L11,12.5" fill="none" stroke="#cccccc" stroke-width="1.8"/><circle cx="17.5" cy="17.5" r="5.2" fill="none" stroke="#cccccc" stroke-width="1.8"/><path d="M15.3,15.3 L19.7,19.7 M19.7,15.3 L15.3,19.7" stroke="#cccccc" stroke-width="1.5"/></svg>
  <span style="left:1283px;letter-spacing:0.5px">Signed out</span>
  <svg class="abs" style="left:1421px;top:8px" width="22" height="20" viewBox="0 0 22 20"><path d="M4.2,17.5 A9,9 0 1 1 16.8,17.5" fill="none" stroke="#cccccc" stroke-width="1.8"/><path d="M7.3,14.3 A4.8,4.8 0 1 1 13.7,14.3" fill="none" stroke="#cccccc" stroke-width="1.8"/><circle cx="10.5" cy="11" r="2.2" fill="#cccccc"/><path d="M10.5,12 L10.5,20" stroke="#cccccc" stroke-width="2.2"/></svg>
  <span style="left:1451px">Go Live</span>
  <span style="left:1550px">8.2.12: 8.2</span>
  <svg class="abs" style="left:1677px;top:8px" width="22" height="20" viewBox="0 0 22 20"><circle cx="14" cy="7" r="5.5" fill="none" stroke="#cccccc" stroke-width="1.8"/><circle cx="15" cy="6" r="1.3" fill="#cccccc"/><path d="M10,11 L2,19 M5,16 L7.5,18.5" fill="none" stroke="#cccccc" stroke-width="1.8"/></svg>
  <svg class="abs" style="left:1729px;top:7px" width="23" height="20" viewBox="0 0 23 20"><path d="M2,19 L7,14 M8,9 L14,15 L17,12 C19,10 19,7 17,5 C15,3 12,3 10,5Z M17,5 L21,1" fill="none" stroke="#cccccc" stroke-width="1.8"/></svg>
  <span style="left:1758px;letter-spacing:0.4px">Quokka</span>
  <svg class="abs" style="left:1860px;top:8px" width="25" height="20" viewBox="0 0 25 20"><path d="M1,13 L6,18 L17,3 M10,16 L12,18 L23,3" fill="none" stroke="#cccccc" stroke-width="1.8"/></svg>
  <span style="left:1893px">ph</span>
</div>
</body></html>
